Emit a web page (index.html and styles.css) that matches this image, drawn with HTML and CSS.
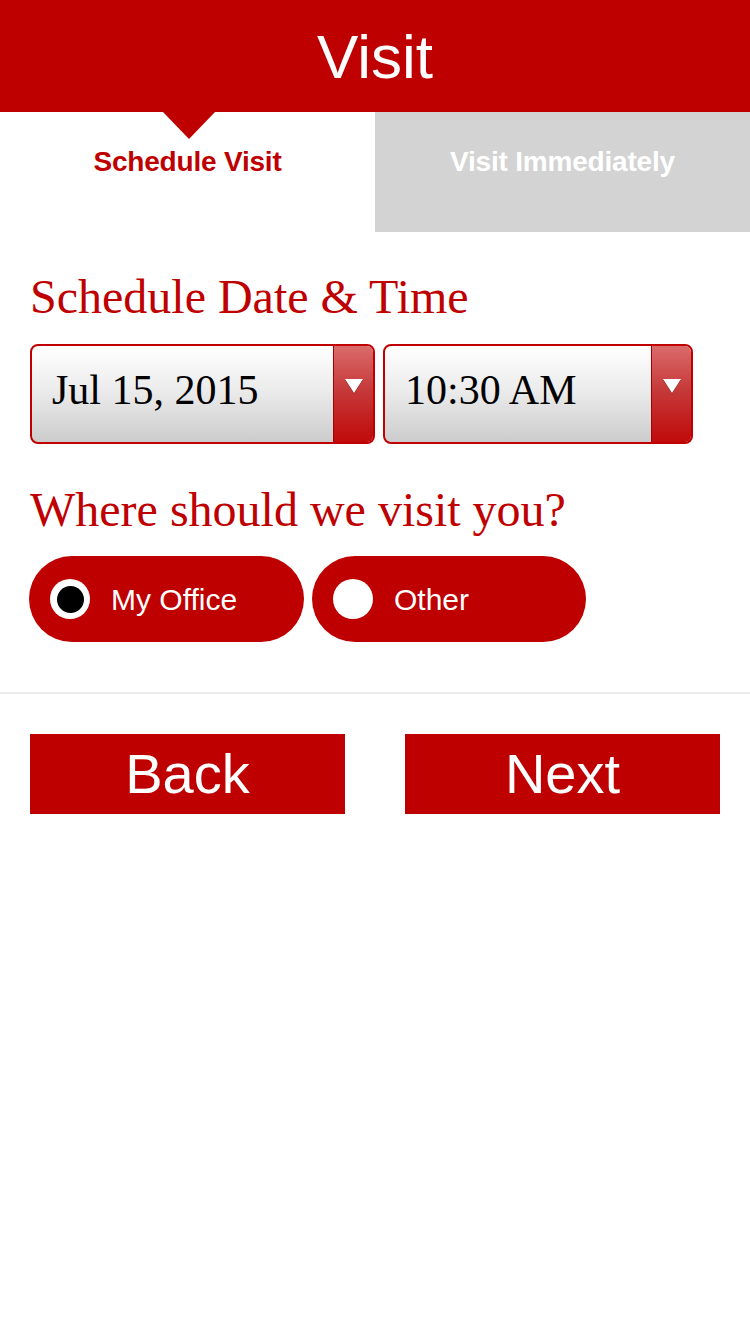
FILE: index.html
```html
<!DOCTYPE html>
<html>
<head>
<meta charset="utf-8">
<link rel="stylesheet" href="styles.css">
</head>
<body>
<header class="topbar">
  <h1 class="title">Visit</h1>
</header>
<nav class="tabs">
  <div class="tab tab-active">
    <span class="pointer"></span>
    <span class="tab-label">Schedule Visit</span>
  </div>
  <div class="tab tab-inactive">
    <span class="tab-label">Visit Immediately</span>
  </div>
</nav>
<main class="content">
  <h2 class="heading heading-date">Schedule Date &amp; Time</h2>
  <div class="selects">
    <div class="select select-date">
      <span class="select-value">Jul 15, 2015</span>
      <span class="select-arrow"><span class="arrow-tri"></span></span>
    </div>
    <div class="select select-time">
      <span class="select-value">10:30 AM</span>
      <span class="select-arrow"><span class="arrow-tri"></span></span>
    </div>
  </div>
  <h2 class="heading heading-where">Where should we visit you?</h2>
  <div class="options">
    <div class="pill pill-first">
      <span class="radio radio-on"><span class="radio-dot"></span></span>
      <span class="pill-label">My Office</span>
    </div>
    <div class="pill pill-second">
      <span class="radio"></span>
      <span class="pill-label">Other</span>
    </div>
  </div>
</main>
<div class="divider"></div>
<div class="actions">
  <div class="btn">Back</div>
  <div class="btn">Next</div>
</div>
</body>
</html>
```
FILE: styles.css
```css
html, body {
  margin: 0;
  padding: 0;
  background: #ffffff;
}
body {
  width: 750px;
  font-family: "Liberation Sans", Arial, sans-serif;
}
.topbar {
  height: 112px;
  background: #bf0000;
  display: flex;
  align-items: center;
  justify-content: center;
}
.title {
  margin: 0;
  color: #ffffff;
  font-size: 62px;
  font-weight: normal;
  line-height: 1;
  padding-top: 2px;
}
.tabs {
  display: flex;
  height: 120px;
}
.tab {
  flex: 1;
  position: relative;
  display: flex;
  justify-content: center;
  padding-top: 35px;
  box-sizing: border-box;
}
.tab-active {
  background: #ffffff;
}
.tab-inactive {
  background: #d3d3d3;
}
.tab-label {
  font-size: 28px;
  font-weight: bold;
  line-height: 30px;
  letter-spacing: -0.2px;
}
.tab-active .tab-label {
  color: #bf0000;
}
.tab-inactive .tab-label {
  color: #ffffff;
}
.pointer {
  position: absolute;
  top: 0;
  left: 163px;
  width: 0;
  height: 0;
  border-left: 26px solid transparent;
  border-right: 26px solid transparent;
  border-top: 27px solid #bf0000;
}
.content {
  padding: 0 30px;
}
.heading {
  margin: 0;
  color: #bf0000;
  font-family: "Liberation Serif", "Times New Roman", serif;
  font-weight: normal;
  line-height: 1;
}
.heading-date {
  font-size: 48px;
  padding-top: 41px;
}
.heading-where {
  font-size: 48px;
  padding-top: 42px;
}
.selects {
  display: flex;
  gap: 8px;
  margin-top: 23px;
}
.select {
  height: 100px;
  box-sizing: border-box;
  border: 2px solid #c00000;
  border-radius: 8px;
  background: linear-gradient(to bottom, #ffffff 0%, #ececec 45%, #cccccc 100%);
  display: flex;
  overflow: hidden;
}
.select-date {
  width: 345px;
}
.select-time {
  width: 310px;
}
.select-value {
  flex: 1;
  display: flex;
  align-items: center;
  padding-left: 20px;
  padding-bottom: 8px;
  font-family: "Liberation Serif", "Times New Roman", serif;
  font-size: 42px;
  color: #000000;
}
.select-arrow {
  width: 40px;
  background: linear-gradient(to bottom, #db6b6b 0%, #c63a3a 45%, #c00a0a 100%);
  border-left: 1px solid #a80000;
  display: flex;
  justify-content: center;
  padding-top: 33px;
  box-sizing: border-box;
}
.arrow-tri {
  width: 0;
  height: 0;
  border-left: 9px solid transparent;
  border-right: 9px solid transparent;
  border-top: 14px solid #ffffff;
  filter: drop-shadow(0 1px 0 rgba(80,0,0,0.5));
}
.options {
  display: flex;
  gap: 8px;
  margin-top: 22px;
}
.pill {
  height: 86px;
  border-radius: 43px;
  background: #bf0000;
  display: flex;
  align-items: center;
  box-sizing: border-box;
  padding-left: 21px;
}
.pill-first {
  width: 275px;
  margin-left: -1px;
}
.pill-second {
  width: 274px;
}
.radio {
  width: 40px;
  height: 40px;
  border-radius: 50%;
  background: #ffffff;
  display: flex;
  align-items: center;
  justify-content: center;
  flex-shrink: 0;
}
.radio-dot {
  width: 27px;
  height: 27px;
  border-radius: 50%;
  background: #000000;
}
.pill-label {
  color: #ffffff;
  font-size: 30px;
  margin-left: 21px;
  padding-top: 1px;
}
.divider {
  margin-top: 50px;
  height: 2px;
  background: #ececec;
}
.actions {
  display: flex;
  justify-content: space-between;
  padding: 40px 30px 0;
}
.btn {
  width: 315px;
  height: 80px;
  background: #bf0000;
  color: #ffffff;
  font-size: 56px;
  display: flex;
  align-items: center;
  justify-content: center;
  line-height: 1;
}
```
